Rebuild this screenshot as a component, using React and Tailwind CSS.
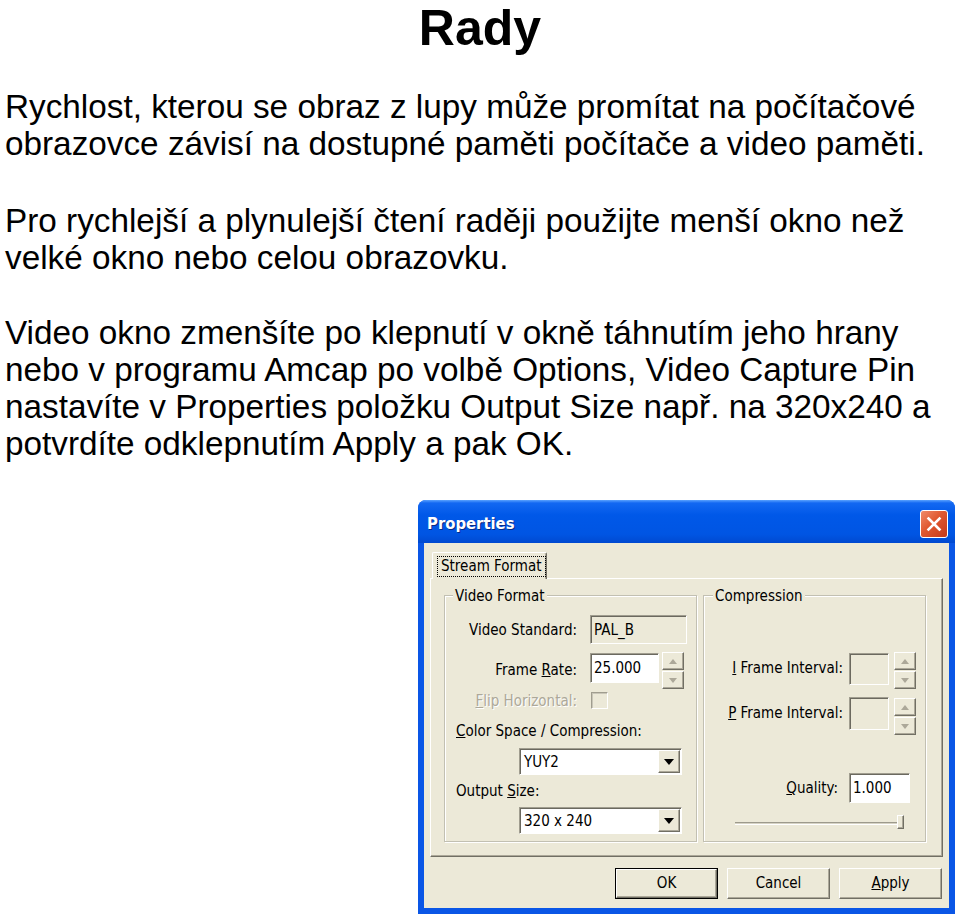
import React from "react";

const UI = "font-['DejaVu_Sans_Condensed','DejaVu_Sans',sans-serif]";

function SpinBtn({ up, w = "w-[22px]" }) {
  return (
    <div className={"h-[18px] bg-[#ECE9D8] border border-t-white border-l-white border-r-[#716f64] border-b-[#716f64] shadow-[inset_-1px_-1px_0_#aca899] flex items-center justify-center " + w}>
      <svg width="8" height="5" viewBox="0 0 8 5">
        <path d={up ? "M4 0L8 5H0z" : "M0 0h8L4 5z"} fill="#aca899" />
      </svg>
    </div>
  );
}

function Spin() {
  return (
    <div className="flex flex-col gap-[1px]">
      <SpinBtn up />
      <SpinBtn />
    </div>
  );
}

function Combo({ value }) {
  return (
    <div className="w-[163px] h-[27px] bg-white border border-t-[#a09d8f] border-l-[#a09d8f] border-r-white border-b-white shadow-[inset_1px_1px_0_#6b695f] flex items-center">
      <span className="flex-1 pl-[4px] text-[15px] leading-[18px]">{value}</span>
      <div className="w-[22px] h-[23px] mr-[1px] bg-[#ECE9D8] border border-t-white border-l-white border-r-[#716f64] border-b-[#716f64] shadow-[inset_-1px_-1px_0_#aca899] flex items-center justify-center">
        <svg width="10" height="6" viewBox="0 0 10 6">
          <path d="M0 0h10L5 6z" fill="#000" />
        </svg>
      </div>
    </div>
  );
}

function Btn({ children, def }) {
  const inner = (
    <div className="w-full h-full bg-[#ECE9D8] border border-t-white border-l-white border-r-[#716f64] border-b-[#716f64] shadow-[inset_-1px_-1px_0_#aca899] flex items-center justify-center text-[15px]">
      {children}
    </div>
  );
  if (def) {
    return <div className="w-[103px] h-[31px] border border-black">{inner}</div>;
  }
  return <div className="w-[103px] h-[31px]">{inner}</div>;
}

function Dialog() {
  return (
    <div className={"ml-[418px] w-[537px] h-[414px] rounded-t-[8px] bg-[#0a56e6] flex flex-col overflow-hidden text-black " + UI}>
      {/* title bar */}
      <div className="h-[43px] shrink-0 flex items-center justify-between pl-[9px] pr-[7px] pt-[4px] bg-[linear-gradient(180deg,#5aa2ff_0%,#1368f2_7%,#0058e8_35%,#0055e3_80%,#0049d0_100%)]">
        <span className="text-white font-bold text-[16.5px] leading-[20px] [text-shadow:1px_1px_0_#0a2a85]">Properties</span>
        <div className="w-[28px] h-[28px] rounded-[3px] border border-white bg-[linear-gradient(135deg,#f08b6a_0%,#e0582f_45%,#c5391b_100%)] flex items-center justify-center">
          <svg width="16" height="16" viewBox="0 0 16 16">
            <path d="M2.5 2.5L13.5 13.5M13.5 2.5L2.5 13.5" stroke="#fff" strokeWidth="2.6" strokeLinecap="square" />
          </svg>
        </div>
      </div>
      {/* body */}
      <div className="mx-[6px] h-[365px] bg-[#ECE9D8] pt-[9px] flex flex-col">
        {/* tab */}
        <div className="ml-[8px] w-[115px] h-[27px] -mb-[1px] relative z-10 bg-[#ECE9D8] border-t border-l border-white border-r border-r-[#716f64] shadow-[inset_-1px_0_0_#aca899] rounded-t-[2px] flex items-center pl-[4px] whitespace-nowrap">
          <span className="border border-dotted border-black px-[3px] text-[15px] leading-[19px] whitespace-nowrap">Stream Format</span>
        </div>
        {/* panel */}
        <div className="ml-[6px] w-[513px] h-[279px] border border-t-white border-l-white border-r-[#716f64] border-b-[#716f64] shadow-[inset_-1px_-1px_0_#aca899] flex pl-[13px] pt-[16px] gap-[6px]">
          {/* Video Format group */}
          <div className="w-[253px] h-[247px] border border-[#c2c0b2] shadow-[1px_1px_0_#fff,inset_1px_1px_0_#fff] flex flex-col text-[15px]">
            <div className="-mt-[9px] ml-[8px] px-[2px] w-fit bg-[#ECE9D8] leading-[18px]">Video Format</div>
            <div className="mt-[10px] h-[29px] flex items-center">
              <span className="w-[132px] text-right leading-[18px]">Video Standard:</span>
              <div className="ml-[13px] w-[97px] h-[29px] bg-[#ECE9D8] border border-t-[#a09d8f] border-l-[#a09d8f] border-r-white border-b-white shadow-[inset_1px_1px_0_#6b695f] flex items-center pl-[3px] leading-[18px]">PAL_B</div>
            </div>
            <div className="mt-[8px] h-[38px] flex items-start">
              <span className="w-[132px] text-right leading-[18px] mt-[9px]">
                Frame <span className="underline">R</span>ate:
              </span>
              <div className="ml-[13px] mt-[1px] w-[69px] h-[30px] bg-white border border-t-[#a09d8f] border-l-[#a09d8f] border-r-white border-b-white shadow-[inset_1px_1px_0_#6b695f] flex items-center pl-[3px] leading-[18px]">25.000</div>
              <div className="ml-[3px]">
                <Spin />
              </div>
            </div>
            <div className="mt-[2px] h-[17px] flex items-center">
              <span className="w-[132px] text-right leading-[18px] text-[#aca899] [text-shadow:1px_1px_0_#fff]">
                <span className="underline">F</span>lip Horizontal:
              </span>
              <div className="ml-[14px] w-[17px] h-[17px] bg-[#ECE9D8] border border-t-[#a09d8f] border-l-[#a09d8f] border-r-white border-b-white shadow-[inset_1px_1px_0_#c9c6b8]" />
            </div>
            <div className="mt-[13px] h-[18px] pl-[11px] leading-[18px]">
              <span className="underline">C</span>olor Space / Compression:
            </div>
            <div className="mt-[8px] pl-[74px]">
              <Combo value="YUY2" />
            </div>
            <div className="mt-[7px] h-[18px] pl-[11px] leading-[18px]">
              Output <span className="underline">S</span>ize:
            </div>
            <div className="mt-[7px] pl-[74px]">
              <Combo value="320 x 240" />
            </div>
          </div>
          {/* Compression group */}
          <div className="w-[223px] h-[247px] border border-[#c2c0b2] shadow-[1px_1px_0_#fff,inset_1px_1px_0_#fff] flex flex-col text-[15px]">
            <div className="-mt-[9px] ml-[9px] px-[2px] w-fit bg-[#ECE9D8] leading-[18px]">Compression</div>
            <div className="mt-[47px] h-[38px] flex items-start">
              <span className="w-[139px] text-right leading-[18px] mt-[7px]">
                <span className="underline">I</span> Frame Interval:
              </span>
              <div className="ml-[6px] mt-[1px] w-[40px] h-[32px] bg-[#ECE9D8] border border-t-[#a09d8f] border-l-[#a09d8f] border-r-white border-b-white shadow-[inset_1px_1px_0_#6b695f]" />
              <div className="ml-[5px]">
                <Spin />
              </div>
            </div>
            <div className="mt-[7px] h-[38px] flex items-start">
              <span className="w-[139px] text-right leading-[18px] mt-[7px]">
                <span className="underline">P</span> Frame Interval:
              </span>
              <div className="ml-[6px] w-[40px] h-[33px] bg-[#ECE9D8] border border-t-[#a09d8f] border-l-[#a09d8f] border-r-white border-b-white shadow-[inset_1px_1px_0_#6b695f]" />
              <div className="ml-[5px] mt-[1px]">
                <Spin />
              </div>
            </div>
            <div className="mt-[38px] h-[30px] flex items-center justify-end pr-[15px]">
              <span className="leading-[18px]">
                <span className="underline">Q</span>uality:
              </span>
              <div className="ml-[11px] w-[61px] h-[30px] bg-white border border-t-[#a09d8f] border-l-[#a09d8f] border-r-white border-b-white shadow-[inset_1px_1px_0_#6b695f] flex items-center pl-[3px] leading-[18px]">1.000</div>
            </div>
            <div className="mt-[11px] h-[18px] pl-[31px] flex items-center">
              <div className="w-[163px] h-[3px] border-t border-t-[#9d9a8c] border-b border-b-white bg-[#d6d3c4]" />
              <div className="w-[7px] h-[14px] -ml-[1px] mt-[-2px] bg-[#ECE9D8] border border-t-white border-l-white border-r-[#716f64] border-b-[#716f64] shadow-[inset_-1px_-1px_0_#aca899]" />
            </div>
          </div>
        </div>
        {/* buttons */}
        <div className="mt-[11px] flex justify-end pr-[7px] gap-[9px]">
          <Btn def>OK</Btn>
          <Btn>Cancel</Btn>
          <Btn>
            <span>
              <span className="underline">A</span>pply
            </span>
          </Btn>
        </div>
      </div>
    </div>
  );
}

export default function App() {
  return (
    <div className="w-[960px] h-[914px] bg-white overflow-hidden text-black">
      <div className="h-[500px] font-['Liberation_Sans',Arial,sans-serif]">
        <h1 className="pt-[3px] text-center font-bold text-[50px] leading-[50px]">Rady</h1>
        <p className="mt-[35px] px-[5px] text-[33.3px] leading-[37px] whitespace-nowrap">
          Rychlost, kterou se obraz z lupy může promítat na počítačové
          <br />
          obrazovce závisí na dostupné paměti počítače a video paměti.
        </p>
        <p className="mt-[40px] px-[5px] text-[33.3px] leading-[37px] whitespace-nowrap">
          Pro rychlejší a plynulejší čtení raději použijte menší okno než
          <br />
          velké okno nebo celou obrazovku.
        </p>
        <p className="mt-[38px] px-[5px] text-[33.3px] leading-[37px] whitespace-nowrap">
          Video okno zmenšíte po klepnutí v okně táhnutím jeho hrany
          <br />
          nebo v programu Amcap po volbě Options, Video Capture Pin
          <br />
          nastavíte v Properties položku Output Size např. na 320x240 a
          <br />
          potvrdíte odklepnutím Apply a pak OK.
        </p>
      </div>
      <Dialog />
    </div>
  );
}
